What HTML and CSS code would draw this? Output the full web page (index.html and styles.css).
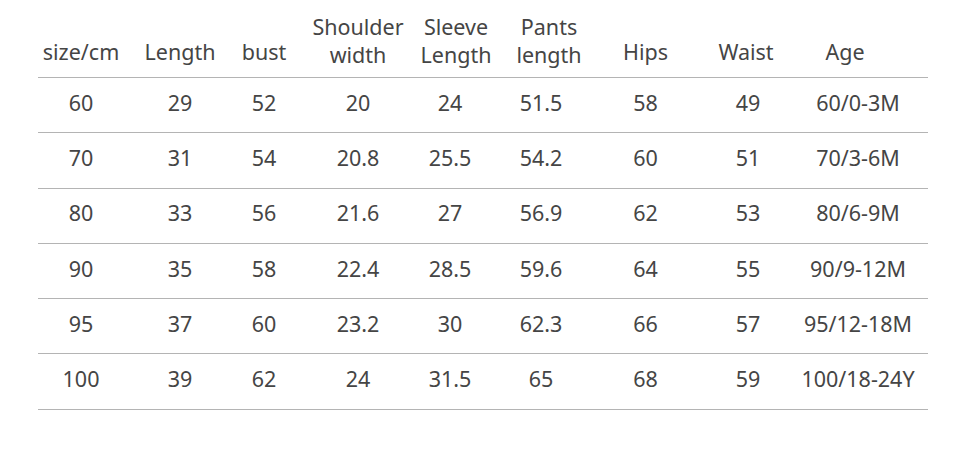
FILE: index.html
```html
<!DOCTYPE html>
<html>
<head>
<meta charset="utf-8">
<link rel="stylesheet" href="styles.css">
</head>
<body>
<div class="wrap">
<table class="sizes">
  <colgroup>
    <col class="c1"><col class="c2"><col class="c3"><col class="c4"><col class="c5"><col class="c6"><col class="c7"><col class="c8"><col class="c9">
  </colgroup>
  <thead>
    <tr>
      <th class="one">size/cm</th><th class="one">Length</th><th class="one">bust</th><th>Shoulder<br>width</th><th>Sleeve<br>Length</th><th>Pants<br>length</th><th class="one">Hips</th><th class="one">Waist</th><th class="one">Age</th>
    </tr>
  </thead>
  <tbody>
    <tr><td>60</td><td>29</td><td>52</td><td>20</td><td>24</td><td>51.5</td><td>58</td><td>49</td><td>60/0-3M</td></tr>
    <tr><td>70</td><td>31</td><td>54</td><td>20.8</td><td>25.5</td><td>54.2</td><td>60</td><td>51</td><td>70/3-6M</td></tr>
    <tr><td>80</td><td>33</td><td>56</td><td>21.6</td><td>27</td><td>56.9</td><td>62</td><td>53</td><td>80/6-9M</td></tr>
    <tr><td>90</td><td>35</td><td>58</td><td>22.4</td><td>28.5</td><td>59.6</td><td>64</td><td>55</td><td>90/9-12M</td></tr>
    <tr><td>95</td><td>37</td><td>60</td><td>23.2</td><td>30</td><td>62.3</td><td>66</td><td>57</td><td>95/12-18M</td></tr>
    <tr><td>100</td><td>39</td><td>62</td><td>24</td><td>31.5</td><td>65</td><td>68</td><td>59</td><td>100/18-24Y</td></tr>
  </tbody>
</table>
</div>
</body>
</html>
```
FILE: styles.css
```css
html, body {
  margin: 0;
  padding: 0;
  background: #ffffff;
}
.wrap {
  padding: 9px 0 0 38px;
}
.sizes {
  width: 890px;
  border-collapse: collapse;
  table-layout: fixed;
  font-family: "Noto Sans", "Open Sans", sans-serif;
  font-size: 21.5px;
  color: #454545;
}
.c1 { width: 92px; }
.c2 { width: 92px; }
.c3 { width: 89px; }
.c4 { width: 94px; }
.c5 { width: 94px; }
.c6 { width: 96px; }
.c7 { width: 101px; }
.c8 { width: 100px; }
.c9 { width: 132px; }
.sizes th {
  font-weight: normal;
  line-height: 28px;
  vertical-align: bottom;
  padding: 0 0 8px 0;
  height: 57px;
  border-bottom: 1.5px solid #b4b4b4;
  text-align: center;
  white-space: nowrap;
}
.sizes th.one { padding-bottom: 11px; }
.sizes td {
  height: 55.3px;
  padding: 0 0 6px 0;
  box-sizing: border-box;
  text-align: center;
  vertical-align: middle;
  border-bottom: 1.5px solid #b4b4b4;
  white-space: nowrap;
}
.sizes th:nth-child(1), .sizes td:nth-child(1) { padding-right: 6px; }
.sizes th:nth-child(2), .sizes td:nth-child(2) { padding-left: 8px; }
.sizes th:nth-child(3), .sizes td:nth-child(3) { padding-right: 5px; }
.sizes th:nth-child(5) { padding-left: 8px; }
.sizes td:nth-child(5) { padding-right: 4px; }
.sizes th:nth-child(6) { padding-left: 4px; }
.sizes td:nth-child(6) { padding-right: 12px; }
.sizes td:nth-child(8) { padding-left: 4px; }
.sizes th:nth-child(9) { padding-right: 34px; }
.sizes td:nth-child(9) { padding-right: 8px; }
```
